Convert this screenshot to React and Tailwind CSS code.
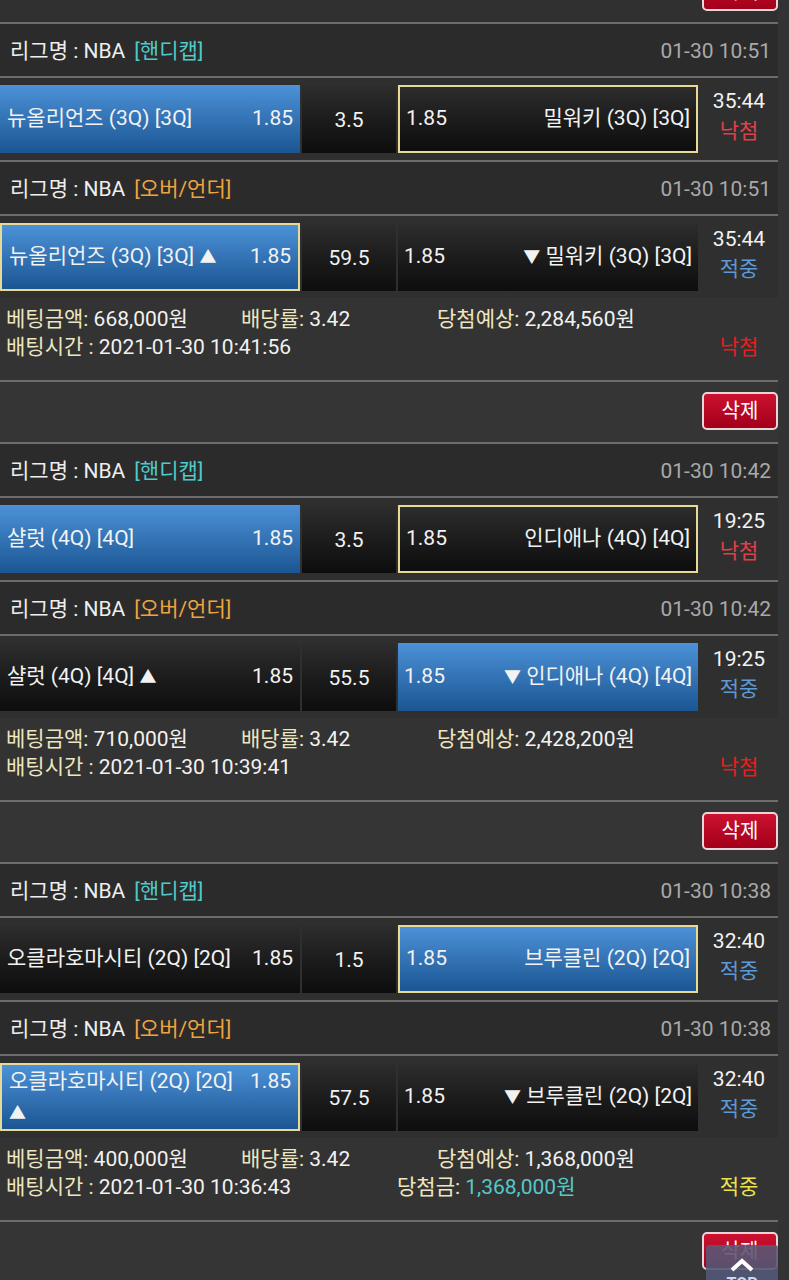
import React from 'react';

const FONT = { fontFamily: 'Roboto, "Noto Sans CJK KR", sans-serif' };

const bets = [
  {
    games: [
      {
        type: '핸디캡', date: '01-30 10:51',
        home: { name: '뉴올리언즈 (3Q) [3Q]', odds: '1.85', blue: true },
        mid: '3.5',
        away: { name: '밀워키 (3Q) [3Q]', odds: '1.85', border: true },
        time: '35:44', status: 'lose',
      },
      {
        type: '오버/언더', date: '01-30 10:51',
        home: { name: '뉴올리언즈 (3Q) [3Q]', arrow: 'up', odds: '1.85', blue: true, border: true },
        mid: '59.5',
        away: { name: '밀워키 (3Q) [3Q]', arrow: 'down', odds: '1.85' },
        time: '35:44', status: 'win',
      },
    ],
    amount: '668,000원', rate: '3.42', expect: '2,284,560원',
    time: '2021-01-30 10:41:56', result: 'lose',
  },
  {
    games: [
      {
        type: '핸디캡', date: '01-30 10:42',
        home: { name: '샬럿 (4Q) [4Q]', odds: '1.85', blue: true },
        mid: '3.5',
        away: { name: '인디애나 (4Q) [4Q]', odds: '1.85', border: true },
        time: '19:25', status: 'lose',
      },
      {
        type: '오버/언더', date: '01-30 10:42',
        home: { name: '샬럿 (4Q) [4Q]', arrow: 'up', odds: '1.85' },
        mid: '55.5',
        away: { name: '인디애나 (4Q) [4Q]', arrow: 'down', odds: '1.85', blue: true },
        time: '19:25', status: 'win',
      },
    ],
    amount: '710,000원', rate: '3.42', expect: '2,428,200원',
    time: '2021-01-30 10:39:41', result: 'lose',
  },
  {
    games: [
      {
        type: '핸디캡', date: '01-30 10:38',
        home: { name: '오클라호마시티 (2Q) [2Q]', odds: '1.85' },
        mid: '1.5',
        away: { name: '브루클린 (2Q) [2Q]', odds: '1.85', blue: true, border: true },
        time: '32:40', status: 'win',
      },
      {
        type: '오버/언더', date: '01-30 10:38',
        home: { name: '오클라호마시티 (2Q) [2Q]', arrow: 'up', odds: '1.85', blue: true, border: true, wrap: true },
        mid: '57.5',
        away: { name: '브루클린 (2Q) [2Q]', arrow: 'down', odds: '1.85' },
        time: '32:40', status: 'win',
      },
    ],
    amount: '400,000원', rate: '3.42', expect: '1,368,000원',
    time: '2021-01-30 10:36:43', result: 'win', won: '1,368,000원',
  },
];

const Line = () => <div className="h-[2px] bg-[#6c6c6c]" />;

const Tri = ({ dir }) => (
  <span className="text-[17px]">{dir === 'up' ? '▲' : '▼'}</span>
);

const cellBg = (side) => {
  let cls = side.blue
    ? 'bg-gradient-to-b from-[#4c92d8] to-[#1b5693]'
    : 'bg-gradient-to-b from-[#2d2d2d] to-[#0d0d0d]';
  if (side.border) cls += ' border-2 border-[#e7d996]';
  return cls;
};

const DeleteButton = () => (
  <button className="h-[38px] w-[76px] shrink-0 rounded-[5px] border-2 border-[#ead6d6] bg-gradient-to-b from-[#cc1230] to-[#a2001a] text-[20px] leading-none text-white">
    삭제
  </button>
);

const Header = ({ type, date }) => (
  <div className="flex h-[52px] items-center justify-between bg-[#2b2b2b] pl-[10px] pr-[7px] pt-[4px] text-[21px]">
    <div>
      <span className="text-[#eeeeee]">리그명 : NBA</span>
      <span className={`ml-[9px] ${type === '핸디캡' ? 'text-[#4fcaca]' : 'text-[#eea43e]'}`}>[{type}]</span>
    </div>
    <span className="text-[#a9a9a9]">{date}</span>
  </div>
);

const GameRow = ({ g }) => (
  <div className="flex h-[82px] gap-[2px] bg-[#2f2f2f] pb-[7px] pt-[7px] text-[21px] text-[#f2f2f2]">
    <div
      className={`flex w-[300px] shrink-0 justify-between px-[7px] ${g.home.wrap ? 'items-start pt-[1px]' : 'items-center'} ${cellBg(g.home)}`}
    >
      <span className={g.home.wrap ? 'w-[232px] leading-[31px]' : ''}>
        {g.home.name}
        {g.home.arrow && (
          <>
            {' '}
            <Tri dir={g.home.arrow} />
          </>
        )}
      </span>
      <span className={g.home.wrap ? 'leading-[31px]' : ''}>{g.home.odds}</span>
    </div>
    <div className="flex w-[94px] shrink-0 items-center justify-center bg-gradient-to-b from-[#2d2d2d] to-[#0d0d0d] pt-[4px]">
      {g.mid}
    </div>
    <div className={`flex w-[300px] shrink-0 items-center justify-between px-[6px] ${cellBg(g.away)}`}>
      <span>{g.away.odds}</span>
      <span>
        {g.away.arrow && (
          <>
            <Tri dir={g.away.arrow} />{' '}
          </>
        )}
        {g.away.name}
      </span>
    </div>
    <div className="flex flex-1 flex-col items-center pt-[1px] leading-[30px]">
      <span className="text-[#f2f2f2]">{g.time}</span>
      <span className={g.status === 'win' ? 'text-[#5b9ad6]' : 'text-[#e0404a]'}>
        {g.status === 'win' ? '적중' : '낙첨'}
      </span>
    </div>
  </div>
);

const Label = ({ children }) => <span className="text-[#eee6c0]">{children}</span>;

const Info = ({ b }) => (
  <div className="bg-[#333333] pb-[19px] pl-[6px] pt-[7px] text-[21px] leading-[28px] text-[#f2f2f2]">
    <div className="flex">
      <div className="w-[235px] shrink-0">
        <Label>베팅금액:</Label> {b.amount}
      </div>
      <div className="w-[196px] shrink-0">
        <Label>배당률:</Label> {b.rate}
      </div>
      <div>
        <Label>당첨예상:</Label> {b.expect}
      </div>
    </div>
    <div className="flex">
      <div className="w-[391px] shrink-0">
        <Label>배팅시간 :</Label> {b.time}
      </div>
      <div className="flex-1">
        {b.won && (
          <>
            <Label>당첨금:</Label> <span className="text-[#55c9c9]">{b.won}</span>
          </>
        )}
      </div>
      <div className={`w-[78px] text-center ${b.result === 'win' ? 'text-[#ece24c]' : 'text-[#e3201f]'}`}>
        {b.result === 'win' ? '적중' : '낙첨'}
      </div>
    </div>
  </div>
);

const DeleteRow = ({ children }) => (
  <div className="relative flex h-[60px] justify-end bg-[#353535] pt-[10px]">
    <DeleteButton />
    {children}
  </div>
);

export default function App() {
  return (
    <div className="min-h-screen w-[789px] overflow-hidden bg-[#333333]" style={FONT}>
      <div className="h-[1280px] w-[778px] overflow-hidden">
        <div className="flex h-[22px] items-end justify-end overflow-hidden bg-[#303030] pb-[11px]">
          <DeleteButton />
        </div>
        {bets.map((b, i) => (
          <div key={i}>
            <Line />
            <Header type={b.games[0].type} date={b.games[0].date} />
            <Line />
            <GameRow g={b.games[0]} />
            <Line />
            <Header type={b.games[1].type} date={b.games[1].date} />
            <Line />
            <GameRow g={b.games[1]} />
            <Info b={b} />
            <Line />
            <DeleteRow>
              {i === bets.length - 1 && (
                <div className="absolute right-0 top-[23px] flex h-[50px] w-[72px] flex-col items-center rounded-t-[3px] bg-gradient-to-b from-[#5e5674]/90 to-[#48587a]/90 pt-[13px]">
                  <svg width="26" height="14" viewBox="0 0 26 14" fill="none">
                    <path d="M3 12 L13 3 L23 12" stroke="#ffffff" strokeWidth="4" />
                  </svg>
                  <span className="mt-[4px] text-[16px] font-bold leading-none text-[#cfd6ea]">TOP</span>
                </div>
              )}
            </DeleteRow>
          </div>
        ))}
      </div>
    </div>
  );
}
